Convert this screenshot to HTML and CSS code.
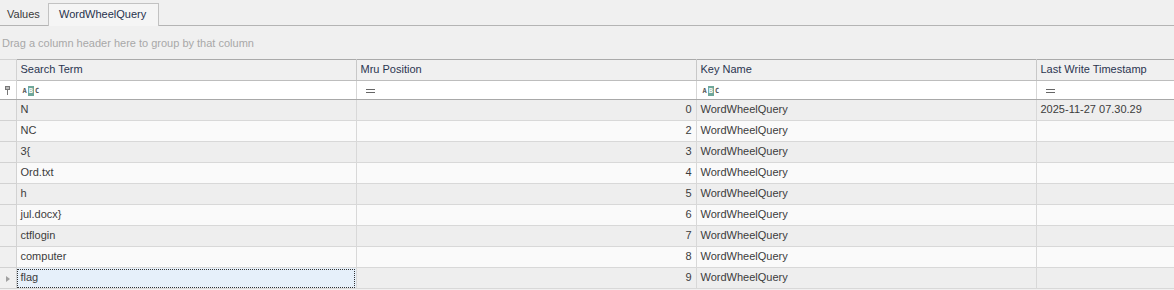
FILE: index.html
```html
<!DOCTYPE html>
<html lang="en">
<head>
  <meta charset="UTF-8">
  <title>WordWheelQuery</title>
  <link rel="stylesheet" href="styles.css">
</head>
<body>
  <div class="tabs">
    <div class="tab">Values</div>
    <div class="tab active">WordWheelQuery</div>
  </div>
  <div class="group-panel">Drag a column header here to group by that column</div>

  <table class="grid">
    <colgroup>
      <col class="c-ind">
      <col class="c-term">
      <col class="c-mru">
      <col class="c-key">
      <col>
    </colgroup>
    <tr class="head">
      <td class="ind"></td>
      <td>Search Term</td>
      <td>Mru Position</td>
      <td>Key Name</td>
      <td>Last Write Timestamp</td>
    </tr>
    <tr class="filter">
      <td class="ind">
        <svg width="7" height="9" viewBox="0 0 7 9"><rect x="1" y="0" width="5" height="4" fill="#777"/><rect x="2" y="1" width="3" height="2" fill="#bbb"/><rect x="3" y="4" width="1" height="5" fill="#777"/></svg>
      </td>
      <td><span class="abc">A<b>B</b>C</span></td>
      <td><span class="eq"></span></td>
      <td><span class="abc">A<b>B</b>C</span></td>
      <td><span class="eq"></span></td>
    </tr>
    <tr class="row"><td class="ind"></td><td>N</td><td class="num">0</td><td>WordWheelQuery</td><td>2025-11-27 07.30.29</td></tr>
    <tr class="row"><td class="ind"></td><td>NC</td><td class="num">2</td><td>WordWheelQuery</td><td></td></tr>
    <tr class="row"><td class="ind"></td><td>3{</td><td class="num">3</td><td>WordWheelQuery</td><td></td></tr>
    <tr class="row"><td class="ind"></td><td>Ord.txt</td><td class="num">4</td><td>WordWheelQuery</td><td></td></tr>
    <tr class="row"><td class="ind"></td><td>h</td><td class="num">5</td><td>WordWheelQuery</td><td></td></tr>
    <tr class="row"><td class="ind"></td><td>jul.docx}</td><td class="num">6</td><td>WordWheelQuery</td><td></td></tr>
    <tr class="row"><td class="ind"></td><td>ctflogin</td><td class="num">7</td><td>WordWheelQuery</td><td></td></tr>
    <tr class="row"><td class="ind"></td><td>computer</td><td class="num">8</td><td>WordWheelQuery</td><td></td></tr>
    <tr class="row current"><td class="ind"><span class="arrow"></span></td><td class="focus">flag</td><td class="num">9</td><td>WordWheelQuery</td><td></td></tr>
  </table>
</body>
</html>
```

FILE: styles.css
```css
body {
  margin: 0;
  background: #f0f0f0;
  font-family: "Liberation Sans", Arial, sans-serif;
  font-size: 11px;
  color: #3c3c3c;
}
.tabs {
  display: flex;
  align-items: flex-end;
  height: 25px;
  border-bottom: 1px solid #b4b4b4;
  padding-left: 2px;
}
.tab {
  height: 21px;
  line-height: 21px;
  padding: 0 5px;
  color: #3a3a3a;
}
.tabs .tab:first-child {
  width: 36px;
}
.tab.active {
  width: 99px;
  padding: 0 0 0 10px;
  border: 1px solid #c2c2c2;
  border-bottom: none;
  background: #f5f5f5;
  color: #27324d;
  margin-bottom: -1px;
  height: 22px;
}
.group-panel {
  height: 33px;
  line-height: 35px;
  padding-left: 2px;
  color: #a8a8a8;
}
.grid {
  border-collapse: collapse;
  table-layout: fixed;
  width: 1175px;
}
.c-ind { width: 16px; }
.c-term { width: 340px; }
.c-mru { width: 340px; }
.c-key { width: 340px; }
.grid td {
  height: 19px;
  padding: 0 4px 1px;
  line-height: 13px;
  border: 1px solid #d6d6d6;
  white-space: nowrap;
  overflow: hidden;
}
.grid td.ind {
  padding: 0;
  height: 20px;
  border-left: none;
  border-color: #d2d2d2;
  background: #f0f0f0;
  text-align: center;
}
.head td {
  border-top: 1px solid #aaaaaa;
  border-bottom: 1px solid #bdbdbd;
  border-left-color: #c8c8c8;
  border-right-color: #c8c8c8;
  background: #f0f0f0;
  color: #2b3550;
}
.grid .filter td {
  background: #ffffff;
  border-bottom: 1px solid #a8a8a8;
  height: 18px;
  padding-bottom: 0;
  line-height: 10px;
}
.grid .filter td.ind {
  border-bottom-color: #a8a8a8;
}
.filter svg {
  display: block;
  margin: 0 auto;
}
.abc {
  font-family: "DejaVu Sans Mono", monospace;
  font-size: 7px;
  font-weight: bold;
  color: #555;
  padding-left: 2px;
}
.abc b {
  background: #6fa79a;
  color: #ffffff;
  padding: 1px 1px;
  margin: 0 1px;
}
.eq {
  display: inline-block;
  width: 9px;
  height: 2px;
  border-top: 1px solid #666;
  border-bottom: 1px solid #666;
  margin-left: 5px;
  vertical-align: middle;
}
.row td {
  background: #fafafa;
  border-color: #d8d8d8;
}
.row:nth-child(odd) td {
  background: #eeeeee;
}
.grid .row td.ind {
  background: #f0f0f0;
}
.num {
  text-align: right;
}
.grid td.focus {
  background: #e6f0fa;
  outline: 1px dotted #333;
  outline-offset: -2px;
}
.arrow {
  display: inline-block;
  width: 0;
  height: 0;
  border-top: 3px solid transparent;
  border-bottom: 3px solid transparent;
  border-left: 4px solid #a0a0a0;
  margin-left: 1px;
}
```
